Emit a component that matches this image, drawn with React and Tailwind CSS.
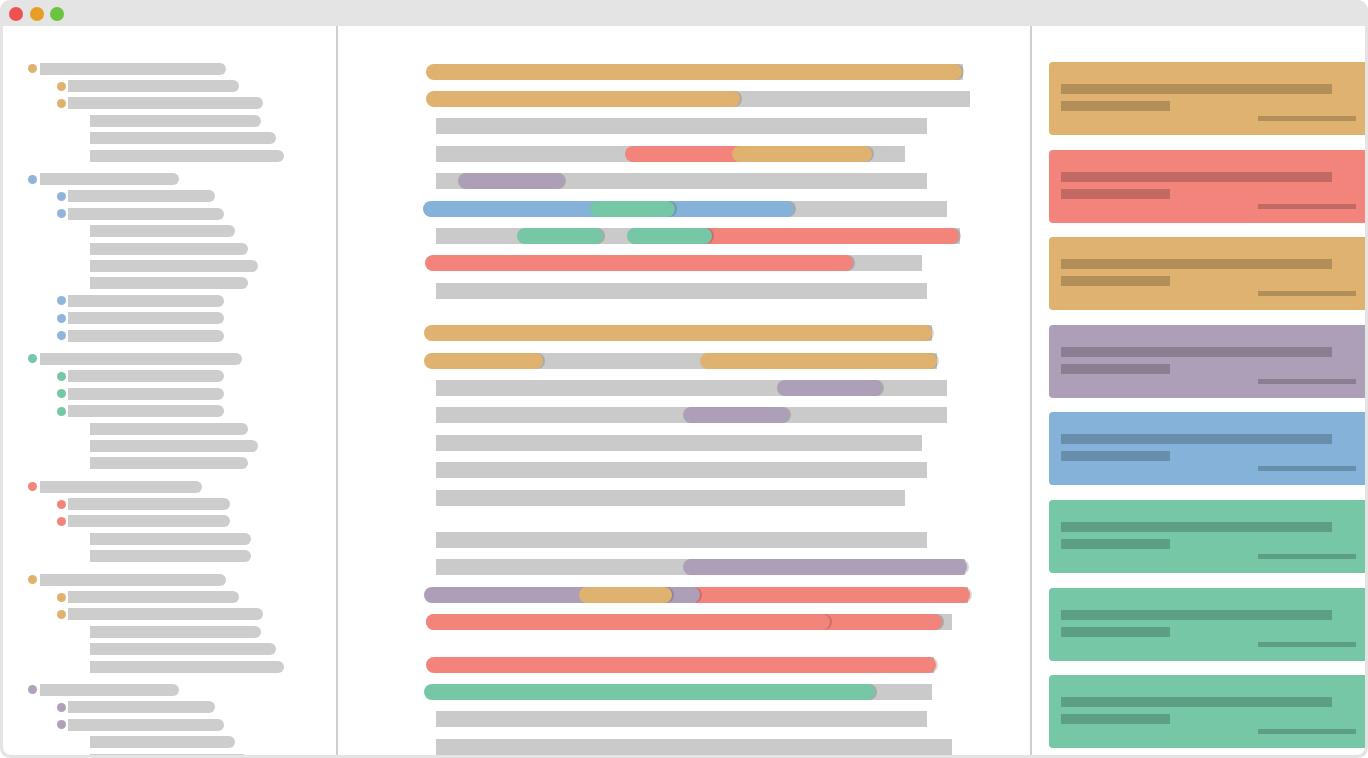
import React from 'react';

const C = {
  O: '#dfb26f',
  R: '#f3847c',
  P: '#ad9fb7',
  B: '#84b2d8',
  G: '#75c7a6',
};

// left tree: [level, right edge x]
const tree = [
  { c: C.O, rows: [[0, 226], [1, 239], [1, 263], [2, 261], [2, 276], [2, 284]] },
  { c: '#8fb6da', rows: [[0, 179], [1, 215], [1, 224], [2, 235], [2, 248], [2, 258], [2, 248], [1, 224], [1, 224], [1, 224]] },
  { c: C.G, rows: [[0, 242], [1, 224], [1, 224], [1, 224], [2, 248], [2, 258], [2, 248]] },
  { c: C.R, rows: [[0, 202], [1, 230], [1, 230], [2, 251], [2, 251]] },
  { c: C.O, rows: [[0, 226], [1, 239], [1, 263], [2, 261], [2, 276], [2, 284]] },
  { c: '#b0a2bb', rows: [[0, 179], [1, 215], [1, 224], [2, 235], [2, 248]] },
];

const start = [40, 68, 90];

// middle rows: gray end, segments [x1, x2, colour] in page x
const lanes = [
  [
    [963, [[426, 962, C.O]]],
    [970, [[426, 740, C.O]]],
    [927, []],
    [905, [[625, 800, C.R], [732, 872, C.O]]],
    [927, [[458, 564, C.P]]],
    [947, [[423, 794, C.B], [590, 675, C.G]]],
    [960, [[517, 603, C.G], [700, 959, C.R], [627, 712, C.G]]],
    [922, [[425, 853, C.R]]],
    [927, []],
  ],
  [
    [932, [[424, 932, C.O]]],
    [937, [[424, 543, C.O], [700, 937, C.O]]],
    [947, [[777, 882, C.P]]],
    [947, [[683, 789, C.P]]],
    [922, []],
    [927, []],
    [905, []],
  ],
  [
    [927, []],
    [965, [[683, 967, C.P]]],
    [968, [[690, 970, C.R], [424, 700, C.P], [579, 672, C.O]]],
    [952, [[426, 942, C.R], [426, 830, C.R]]],
  ],
  [
    [934, [[426, 936, C.R]]],
    [932, [[424, 875, C.G]]],
    [927, []],
    [952, []],
  ],
];

const cards = [C.O, C.R, C.O, C.P, C.B, C.G, C.G, C.G];

function Tree() {
  return (
    <div className="w-[333px] shrink-0 pt-[34px] overflow-hidden">
      {tree.map((g, gi) => (
        <div key={gi} className={gi ? 'mt-[6px]' : ''}>
          {g.rows.map(([lvl, end], i) => (
            <div key={i} className="h-[17.4px] flex items-center">
              {lvl === 0 && <div className="ml-[25px] w-[9px] h-[9px] rounded-full mr-[3px]" style={{ background: g.c }} />}
              {lvl === 1 && <div className="ml-[53.5px] w-[9px] h-[9px] rounded-full mr-[2.5px]" style={{ background: g.c }} />}
              {lvl === 2 && <div className="ml-[87px]" />}
              <div className="h-[12px] rounded-r-full bg-[#cdcdcd]" style={{ width: end - start[lvl] }} />
            </div>
          ))}
        </div>
      ))}
    </div>
  );
}

function Lanes() {
  const ox = 338;
  return (
    <div className="w-[692px] shrink-0 pt-[32px] overflow-hidden">
      {lanes.map((grp, gi) => (
        <div key={gi} className={gi ? 'mt-[15px]' : ''}>
          {grp.map(([end, segs], i) => (
            <div key={i} className="h-[27.4px] flex items-center">
              <div className="relative h-[16px] w-full">
                <div className="h-[16px] bg-[#cacaca]" style={{ marginLeft: 436 - ox, width: end - 436 }} />
                {segs.map(([a, b, c], j) => (
                  <div
                    key={j}
                    className="absolute top-0 h-[16px] rounded-full shadow-[2px_0_0_rgba(0,0,0,0.16)]"
                    style={{ left: a - ox, width: b - a, background: c }}
                  />
                ))}
              </div>
            </div>
          ))}
        </div>
      ))}
    </div>
  );
}

function Cards() {
  return (
    <div className="flex-1 pl-[17px] pt-[36px] flex flex-col gap-[14.6px] overflow-hidden">
      {cards.map((c, i) => (
        <div key={i} className="h-[73px] rounded-l-[4px] pl-[12px] pr-[9px] pt-[22px] flex flex-col" style={{ background: c }}>
          <div className="h-[10px] w-[271px] bg-black/20" />
          <div className="h-[10px] w-[109px] bg-black/20 mt-[7px]" />
          <div className="h-[5px] w-[98px] bg-black/20 mt-[5px] self-end" />
        </div>
      ))}
    </div>
  );
}

export default function App() {
  return (
    <div className="w-[1368px] h-[758px] bg-white overflow-hidden">
      <div className="w-full h-full rounded-[10px] bg-[#e4e4e4] px-[3px] pb-[3px] flex flex-col">
        <div className="h-[26px] shrink-0 flex items-center pl-[6px] pt-[2px] gap-[6.5px]">
          <div className="w-[14px] h-[14px] rounded-full bg-[#ec5350]" />
          <div className="w-[14px] h-[14px] rounded-full bg-[#e89e25]" />
          <div className="w-[14px] h-[14px] rounded-full bg-[#6cc33f]" />
        </div>
        <div className="flex-1 min-h-0 bg-white rounded-b-[8px] flex overflow-hidden">
          <Tree />
          <div className="w-[2px] shrink-0 bg-[#cfcfcf]" />
          <Lanes />
          <div className="w-[2px] shrink-0 bg-[#cfcfcf]" />
          <Cards />
        </div>
      </div>
    </div>
  );
}
